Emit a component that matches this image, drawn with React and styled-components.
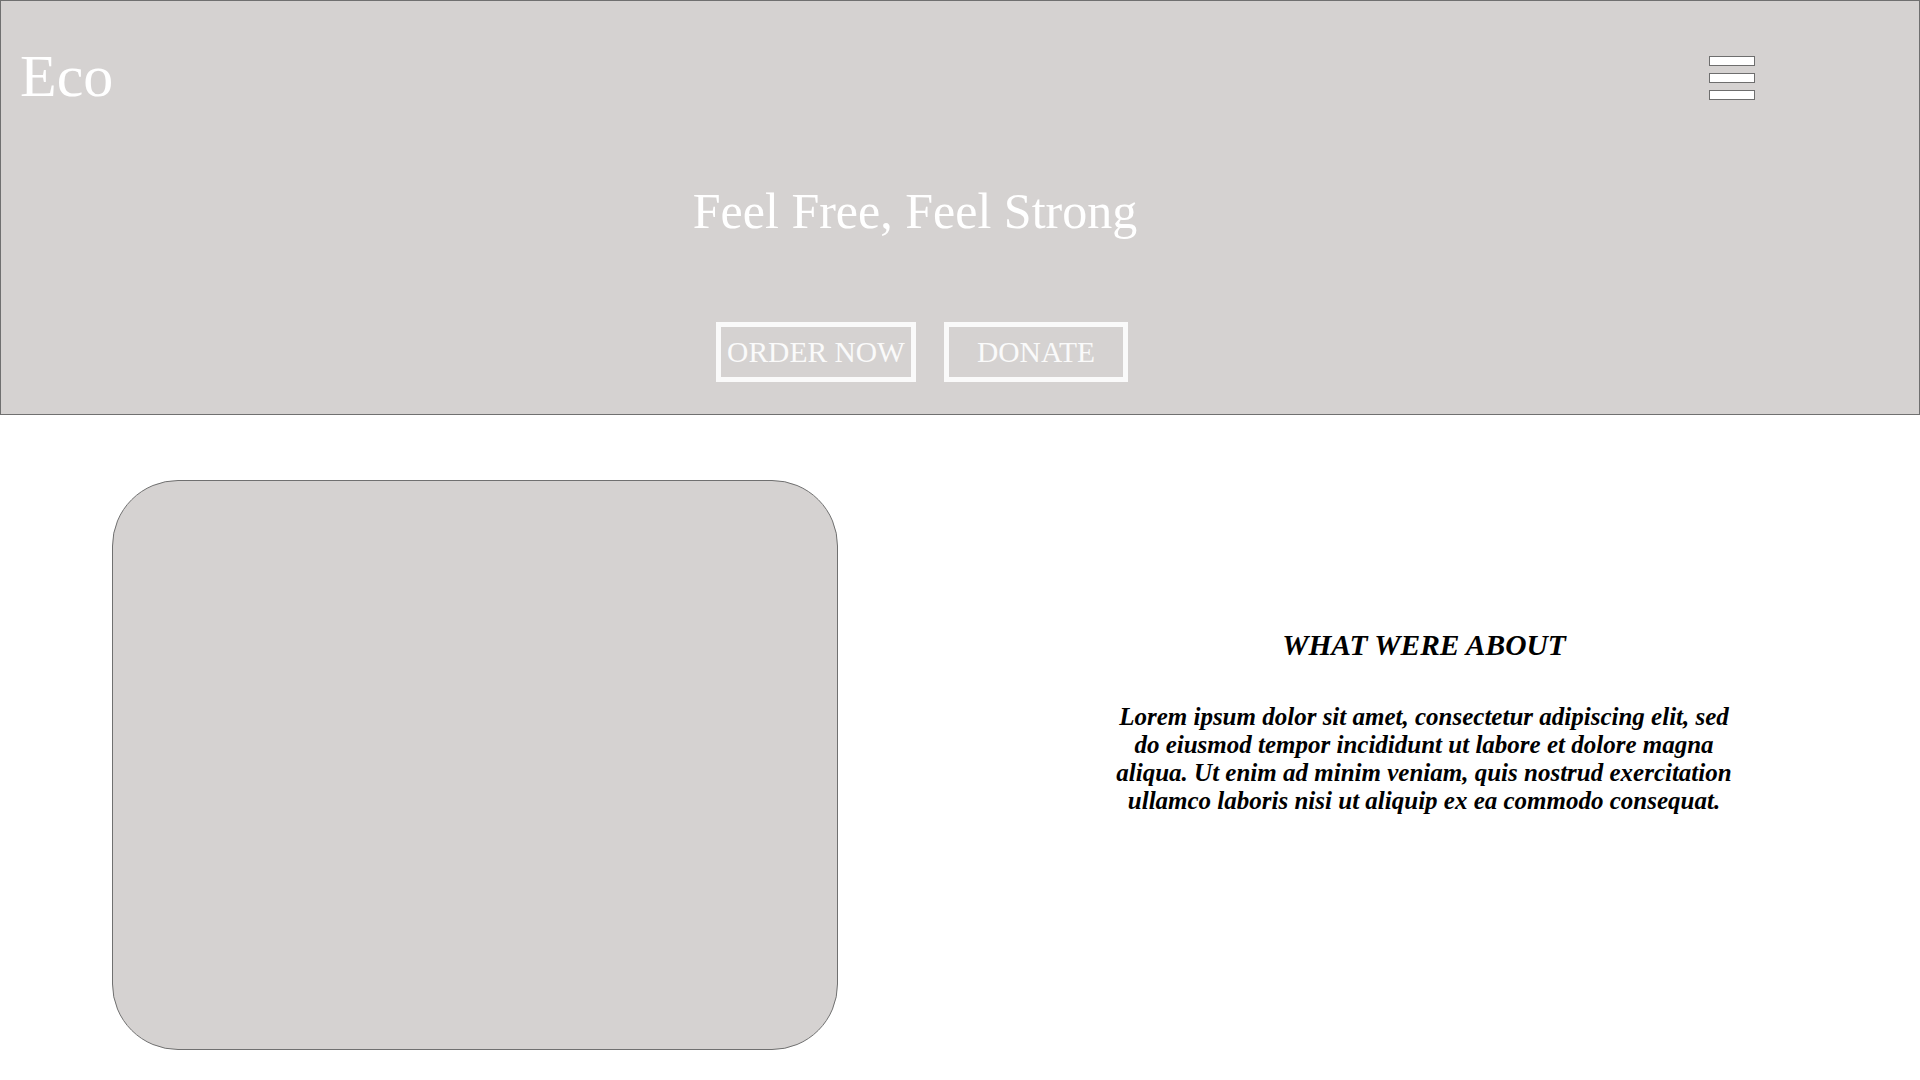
import React from 'react';
import styled, { createGlobalStyle } from 'styled-components';

const GlobalStyle = createGlobalStyle`
  html, body {
    margin: 0;
    padding: 0;
    background: #ffffff;
    font-family: "Liberation Serif", "Times New Roman", serif;
  }
  * {
    box-sizing: border-box;
  }
`

function App() {
  return (
    <>
      <GlobalStyle />
      <Header>
        <TopBar>
          <Logo>Eco</Logo>
          <MenuButton aria-label="menu">
            <Bar />
            <Bar />
            <Bar />
          </MenuButton>
        </TopBar>
        <Title>Feel Free, Feel Strong</Title>
        <Actions>
          <OutlineButton width={200}>ORDER NOW</OutlineButton>
          <OutlineButton width={184}>DONATE</OutlineButton>
        </Actions>
      </Header>
      <About>
        <PhotoBox />
        <AboutText>
          <AboutTitle>WHAT WERE ABOUT</AboutTitle>
          <AboutBody>
            Lorem ipsum dolor sit amet, consectetur adipiscing elit, sed do eiusmod tempor incididunt ut labore et dolore magna aliqua. Ut enim ad minim veniam, quis nostrud exercitation ullamco laboris nisi ut aliquip ex ea commodo consequat.
          </AboutBody>
        </AboutText>
      </About>
    </>
  )
}

const Header = styled.header`
  height: 415px;
  background-color: #d5d2d1;
  border: 1px solid #707070;
  display: flex;
  flex-direction: column;
  color: #ffffff;
`

const TopBar = styled.div`
  display: flex;
  justify-content: space-between;
  align-items: center;
  padding: 41px 164px 0 19px;
`

const Logo = styled.div`
  font-size: 60px;
  line-height: 69px;
`

const MenuButton = styled.div`
  display: flex;
  flex-direction: column;
  gap: 7px;
  margin-top: 3px;
`

const Bar = styled.span`
  display: block;
  width: 46px;
  height: 10px;
  background: #ffffff;
  border: 1px solid #6e6e6e;
`

const Title = styled.h1`
  margin: 72px 90px 0 0;
  font-size: 50px;
  font-weight: normal;
  line-height: 57.5px;
  text-align: center;
`

const Actions = styled.div`
  display: flex;
  justify-content: center;
  gap: 28px;
  margin: 81px 76px 0 0;
`

const OutlineButton = styled.button`
  width: ${props => props.width}px;
  height: 60px;
  padding: 2px 0 0;
  display: flex;
  align-items: center;
  justify-content: center;
  background: transparent;
  border: 5px solid #fafafa;
  color: #fafafa;
  font-family: "Liberation Serif", "Times New Roman", serif;
  font-size: 29.5px;
  white-space: nowrap;
`

const About = styled.section`
  display: flex;
  padding: 65px 0 31px 112px;
`

const PhotoBox = styled.div`
  width: 726px;
  height: 570px;
  flex-shrink: 0;
  background-color: #d5d2d1;
  border: 1px solid #707070;
  border-radius: 66px;
`

const AboutText = styled.div`
  flex: 1;
  display: flex;
  flex-direction: column;
  align-items: center;
  padding: 148px 0 0 90px;
  color: #000000;
`

const AboutTitle = styled.h2`
  margin: 0;
  font-size: 29.5px;
  font-weight: bold;
  font-style: italic;
  line-height: 34.5px;
`

const AboutBody = styled.p`
  width: 628px;
  margin: 40px 0 0;
  font-size: 25px;
  font-weight: bold;
  font-style: italic;
  line-height: 28.2px;
  text-align: center;
`

export default App;
